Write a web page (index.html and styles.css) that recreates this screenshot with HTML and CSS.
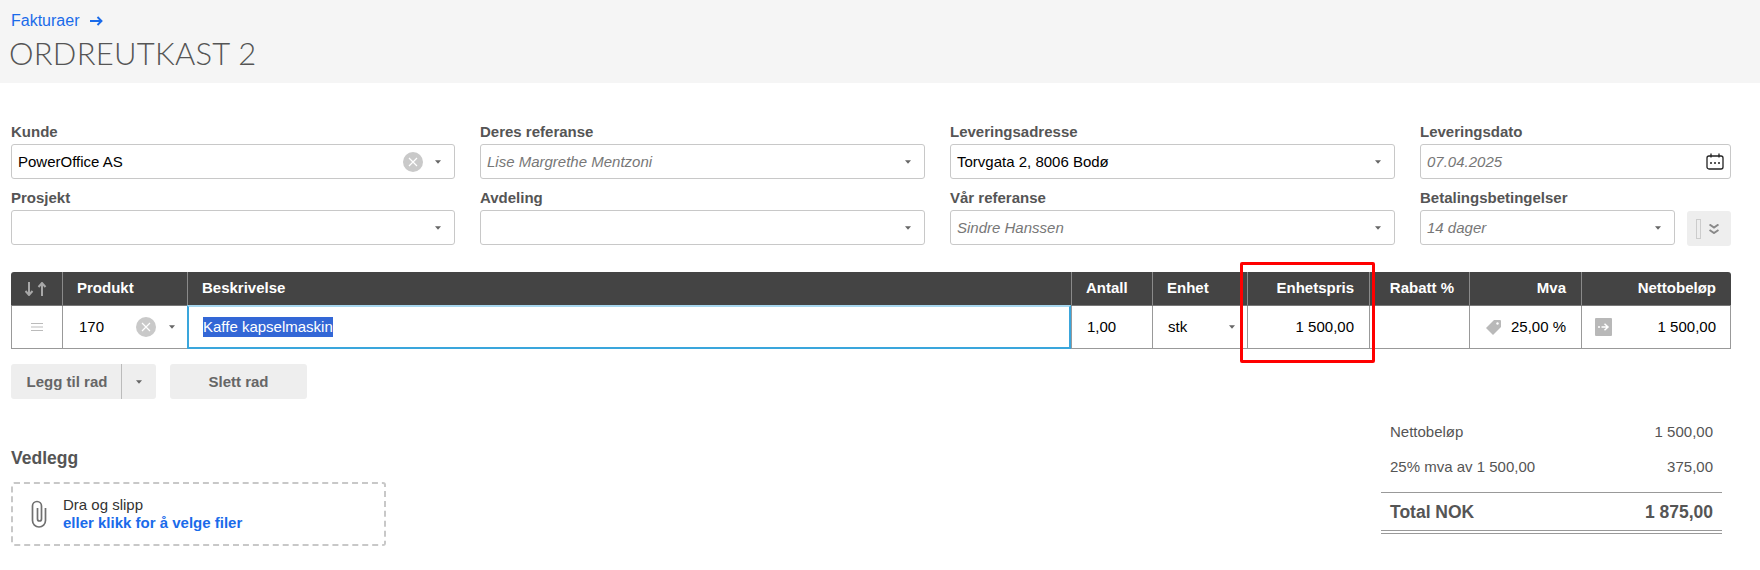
FILE: index.html
```html
<!DOCTYPE html>
<html lang="no">
<head>
<meta charset="utf-8">
<title>Ordreutkast 2</title>
<link rel="stylesheet" href="styles.css">
</head>
<body>
<svg class="defs" width="0" height="0" aria-hidden="true">
  <symbol id="caret" viewBox="0 0 7 4"><path d="M0 0h7L3.500 4z"/></symbol>
  <symbol id="clear" viewBox="0 0 20 20"><circle cx="10" cy="10" r="10" fill="#c9c9c9"/><path d="M6 6l8 8M14 6l-8 8" stroke="#fff" stroke-width="1.200" fill="none"/></symbol>
</svg>

<header class="page-head">
  <a class="crumb" href="#">Fakturaer <svg class="crumb-arrow" viewBox="0 0 13 10" width="13" height="10"><path d="M0 5h11M7.500 1l4 4-4 4" fill="none" stroke="#1a6bea" stroke-width="1.900"/></svg></a>
  <h1 class="title">ORDREUTKAST 2</h1>
</header>

<main class="content">
  <section class="form-grid">
    <div class="field"><label class="label">Kunde</label>
      <div class="select"><span class="val">PowerOffice AS</span><svg class="clear"><use href="#clear"/></svg><svg class="caret"><use href="#caret"/></svg></div></div>
    <div class="field"><label class="label">Deres referanse</label>
      <div class="select"><span class="val muted">Lise Margrethe Mentzoni</span><svg class="caret"><use href="#caret"/></svg></div></div>
    <div class="field"><label class="label">Leveringsadresse</label>
      <div class="select"><span class="val">Torvgata 2, 8006 Bodø</span><svg class="caret"><use href="#caret"/></svg></div></div>
    <div class="field"><label class="label">Leveringsdato</label>
      <div class="select"><span class="val muted">07.04.2025</span>
        <svg class="cal" viewBox="0 0 18 17" width="18" height="17"><rect x="1" y="3" width="16" height="13" rx="2" fill="none" stroke="#222" stroke-width="1.300"/><path d="M5 0.500v4M13 0.500v4" fill="none" stroke="#222" stroke-width="1.300"/><circle cx="5" cy="10" r="1" fill="#222"/><circle cx="9" cy="10" r="1" fill="#222"/><circle cx="13" cy="10" r="1" fill="#222"/></svg></div></div>
    <div class="field"><label class="label">Prosjekt</label>
      <div class="select"><span class="val"></span><svg class="caret"><use href="#caret"/></svg></div></div>
    <div class="field"><label class="label">Avdeling</label>
      <div class="select"><span class="val"></span><svg class="caret"><use href="#caret"/></svg></div></div>
    <div class="field"><label class="label">Vår referanse</label>
      <div class="select"><span class="val muted">Sindre Hanssen</span><svg class="caret"><use href="#caret"/></svg></div></div>
    <div class="field"><label class="label">Betalingsbetingelser</label>
      <div class="terms">
        <div class="select grow"><span class="val muted">14 dager</span><svg class="caret"><use href="#caret"/></svg></div>
        <button class="more" type="button"><span class="more-box"></span>
          <svg viewBox="0 0 10 10" width="10" height="10"><path d="M0.500 0.500l4.500 3 4.500-3M0.500 6l4.500 3 4.500-3" fill="none" stroke="#888" stroke-width="2"/></svg></button>
      </div></div>
  </section>

  <section class="table">
    <div class="t-row t-head">
      <div class="cell c-sort"><svg viewBox="0 0 22 14" width="22" height="14"><path d="M4 0v13M.5 9L4 13l3.500-4M17 14V1M13.500 5L17 1l3.500 4" fill="none" stroke="#a8a8a8" stroke-width="2"/></svg></div>
      <div class="cell">Produkt</div>
      <div class="cell">Beskrivelse</div>
      <div class="cell">Antall</div>
      <div class="cell">Enhet</div>
      <div class="cell right">Enhetspris</div>
      <div class="cell right">Rabatt %</div>
      <div class="cell right">Mva</div>
      <div class="cell right">Nettobeløp</div>
    </div>
    <div class="t-row t-body">
      <div class="cell c-sort"><svg viewBox="0 0 12 8" width="12" height="8"><path d="M0 .5h12M0 4h12M0 7.500h12" stroke="#bbb" stroke-width="1" fill="none"/></svg></div>
      <div class="cell c-prod"><span class="grow">170</span><svg class="clear"><use href="#clear"/></svg><svg class="caret"><use href="#caret"/></svg></div>
      <div class="cell c-desc"><span class="selected">Kaffe kapselmaskin</span></div>
      <div class="cell">1,00</div>
      <div class="cell c-unit"><span class="grow">stk</span><svg class="caret"><use href="#caret"/></svg></div>
      <div class="cell right">1 500,00</div>
      <div class="cell right"></div>
      <div class="cell c-vat"><svg viewBox="0 0 15 15" width="15" height="15"><path d="M8 0h6a1 1 0 0 1 1 1v6l-8 8-7-7z" fill="#b9b9b9"/><circle cx="11.500" cy="3.500" r="1.200" fill="#fff"/></svg><span>25,00 %</span></div>
      <div class="cell c-net"><svg viewBox="0 0 17 18" width="17" height="18"><rect width="17" height="18" rx="1" fill="#b8b8b8"/><path d="M3 9h2M6.500 9h6M9.500 5.800L13 9l-3.500 3.200" fill="none" stroke="#fff" stroke-width="1.500"/></svg><span>1 500,00</span></div>
    </div>
    <div class="highlight"></div>
  </section>

  <section class="actions">
    <div class="split">
      <button class="btn btn-main" type="button">Legg til rad</button>
      <button class="btn btn-drop" type="button"><svg class="caret"><use href="#caret"/></svg></button>
    </div>
    <button class="btn btn-del" type="button">Slett rad</button>
  </section>

  <section class="lower">
    <div class="attach">
      <h2 class="attach-title">Vedlegg</h2>
      <div class="drop">
        <svg class="clip" viewBox="0 0 16 28" width="16" height="28"><path d="M14.500 8v12.500a6.500 6.500 0 0 1-13 0V6a4.500 4.500 0 0 1 9 0v13a2 2 0 0 1-4 0V8" fill="none" stroke="#707070" stroke-width="1.700"/></svg>
        <div class="drop-text"><div>Dra og slipp</div><a class="drop-link" href="#">eller klikk for å velge filer</a></div>
      </div>
    </div>
    <div class="totals">
      <div class="t-line"><span>Nettobeløp</span><span>1 500,00</span></div>
      <div class="t-line"><span>25% mva av 1 500,00</span><span>375,00</span></div>
      <div class="t-total"><span>Total NOK</span><span>1 875,00</span></div>
    </div>
  </section>
</main>
</body>
</html>
```
FILE: styles.css
```css
* { box-sizing: border-box; }
html, body { margin: 0; padding: 0; background: #fff; }
body { font: 15px/20px "Liberation Sans", Arial, sans-serif; color: #000; height: 570px; overflow: hidden; }
.defs { position: absolute; }

.page-head { height: 83px; background: #f5f5f5; padding: 11px 9px 0 11px; }
.crumb { display: flex; align-items: center; gap: 11px; height: 20px; font-size: 16px; color: #1a6bea; text-decoration: none; }
.title { margin: 2px 0 0 -2px; font: 300 31px/40px Lato, sans-serif; color: #555; letter-spacing: 0.25px; }

.content { padding: 38px 29px 0 11px; }
.form-grid { display: grid; grid-template-columns: 444px 445px 445px 311px; column-gap: 25px; row-gap: 8px; }
.label { display: block; height: 23px; font-weight: bold; color: #555; line-height: 22px; }
.select { display: flex; align-items: center; height: 35px; padding: 0 13px 0 6px; border: 1px solid #c8c8c8; border-radius: 3px; background: #fff; }
.val { flex: 1; }
.muted { color: #777; font-style: italic; }
.caret { width: 6px; height: 4px; fill: #666; flex: none; }
.clear { width: 20px; height: 20px; flex: none; margin-right: 12px; }
.cal { margin-right: -7px; }
.terms { display: flex; gap: 12px; }
.grow { flex: 1; }
.more { display: flex; align-items: center; gap: 8px; width: 44px; height: 35px; margin-top: 1px; padding: 0 0 0 9px; border: 0; border-radius: 3px; background: #eee; }
.more-box { width: 5px; height: 20px; border: 1px solid #ccc; }

.table { position: relative; margin-top: 26px; width: 1720px; }
.t-row { display: grid; }
.t-head { grid-template-columns: 51px 125px 884px 81px 95px 122px 100px 112px 150px; height: 33px; background: #444; color: #fff; font-weight: bold; border-radius: 3px 3px 0 0; }
.t-head .cell { border-left: 1px solid #8a8a8a; display: flex; align-items: center; padding: 0 15px 1px 14px; }
.t-head .cell:first-child { border-left: 0; }
.t-head .right { justify-content: flex-end; }
.t-head .c-sort { justify-content: center; padding: 0 1px 0 0; }
.t-body { grid-template-columns: 50px 125px 884px 81px 95px 122px 100px 112px 149px; height: 44px; border: 1px solid #999; border-top-color: #777; }
.t-body .cell { border-left: 1px solid #999; display: flex; align-items: center; padding: 0 15px 0 15px; }
.t-body .cell:first-child { border-left: 0; }
.t-body .right { justify-content: flex-end; }
.t-body .c-sort { justify-content: center; padding: 0; }
.t-body .c-prod { padding-left: 16px; padding-right: 12px; }
.c-prod .clear { margin-right: 13px; }
.t-body .c-unit { padding-right: 12px; }
.t-body .c-desc { border: 2px solid #3aa6dc; border-top-color: #a7d7ef; margin: -1px 0; padding-left: 14px; }
.selected { background: #3367d6; color: #fff; }
.t-body .c-vat { justify-content: space-between; padding-left: 16px; }
.t-body .c-net { justify-content: space-between; padding-left: 13px; padding-right: 14px; }
.highlight { position: absolute; left: 1229px; top: -10px; width: 135px; height: 101px; border: 3px solid #f00; border-radius: 2px; pointer-events: none; }

.actions { display: flex; gap: 14px; margin-top: 15px; }
.split { display: flex; }
.btn { height: 35px; border: 0; background: #eee; color: #666; font: bold 15px/20px "Liberation Sans", Arial, sans-serif; padding: 0; }
.btn-main { width: 111px; padding-left: 2px; border-radius: 3px 0 0 3px; border-right: 1px solid #bbb; }
.btn-drop { width: 34px; border-radius: 0 3px 3px 0; }
.btn-drop .caret { display: block; margin: auto; }
.btn-del { width: 137px; border-radius: 3px; }

.lower { display: flex; justify-content: space-between; margin-top: 15px; padding-right: 9px; }
.attach { padding-top: 34px; }
.attach-title { margin: 0 0 14px; font: bold 17.500px/20px "Liberation Sans", Arial, sans-serif; color: #555; }
.drop { display: flex; align-items: center; gap: 16px; width: 375px; height: 64px; padding-left: 18px; border: 2px dashed #c8c8c8; border-radius: 3px; }
.drop-text { line-height: 18px; color: #333; }
.drop-link { display: block; font-weight: bold; color: #1a6bea; text-decoration: none; }
.totals { width: 341px; color: #555; }
.t-line { display: flex; justify-content: space-between; height: 35px; align-items: center; padding: 0 9px; }
.t-total { display: flex; justify-content: space-between; align-items: center; height: 39px; margin-top: 8px; padding: 0 9px; border-top: 1px solid #999; border-bottom: 1px solid #999; box-shadow: 0 2px 0 #fff, 0 3px 0 #999; font: bold 17.500px/20px "Liberation Sans", Arial, sans-serif; color: #555; }
```
